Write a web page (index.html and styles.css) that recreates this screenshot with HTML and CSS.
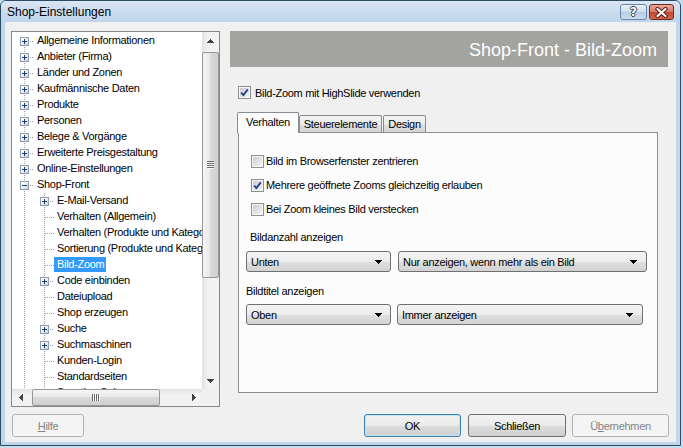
FILE: index.html
```html
<!DOCTYPE html>
<html lang="de">
<head>
<meta charset="utf-8">
<title>Shop-Einstellungen</title>
<link rel="stylesheet" href="styles.css">
</head>
<body>
<div class="window">
  <div class="titlebar">
    <span class="title">Shop-Einstellungen</span>
    <span class="cap-help">?</span>
    <span class="cap-close"><svg width="13" height="11" viewBox="0 0 13 11"><path d="M2.5 2 L10.5 9 M10.5 2 L2.5 9" stroke="#5a1f16" stroke-width="4.2" stroke-linecap="round"/><path d="M2.5 2 L10.5 9 M10.5 2 L2.5 9" stroke="#fff" stroke-width="2.2" stroke-linecap="round"/></svg></span>
  </div>
  <div class="client">
    <div class="leftcol">
      <div class="treebox">
        <div class="tree">
          <div class="row"><span class="cell first"><i class="exp"></i><i class="dash"></i></span><span class="label">Allgemeine Informationen</span></div>
          <div class="row"><span class="cell"><i class="exp"></i><i class="dash"></i></span><span class="label">Anbieter (Firma)</span></div>
          <div class="row"><span class="cell"><i class="exp"></i><i class="dash"></i></span><span class="label">Länder und Zonen</span></div>
          <div class="row"><span class="cell"><i class="exp"></i><i class="dash"></i></span><span class="label">Kaufmännische Daten</span></div>
          <div class="row"><span class="cell"><i class="exp"></i><i class="dash"></i></span><span class="label">Produkte</span></div>
          <div class="row"><span class="cell"><i class="exp"></i><i class="dash"></i></span><span class="label">Personen</span></div>
          <div class="row"><span class="cell"><i class="exp"></i><i class="dash"></i></span><span class="label">Belege &amp; Vorgänge</span></div>
          <div class="row"><span class="cell"><i class="exp"></i><i class="dash"></i></span><span class="label">Erweiterte Preisgestaltung</span></div>
          <div class="row"><span class="cell"><i class="exp"></i><i class="dash"></i></span><span class="label">Online-Einstellungen</span></div>
          <div class="row"><span class="cell"><i class="exp minus"></i><i class="dash"></i></span><span class="label">Shop-Front</span></div>
          <div class="row"><span class="cell"></span><span class="cell"><i class="exp"></i><i class="dash"></i></span><span class="label">E-Mail-Versand</span></div>
          <div class="row"><span class="cell"></span><span class="cell"><i class="dash leaf"></i></span><span class="label">Verhalten (Allgemein)</span></div>
          <div class="row"><span class="cell"></span><span class="cell"><i class="dash leaf"></i></span><span class="label">Verhalten (Produkte und Kategorien)</span></div>
          <div class="row"><span class="cell"></span><span class="cell"><i class="dash leaf"></i></span><span class="label">Sortierung (Produkte und Kategorien)</span></div>
          <div class="row"><span class="cell"></span><span class="cell"><i class="dash leaf"></i></span><span class="label sel">Bild-Zoom</span></div>
          <div class="row"><span class="cell"></span><span class="cell"><i class="exp"></i><i class="dash"></i></span><span class="label">Code einbinden</span></div>
          <div class="row"><span class="cell"></span><span class="cell"><i class="dash leaf"></i></span><span class="label">Dateiupload</span></div>
          <div class="row"><span class="cell"></span><span class="cell"><i class="dash leaf"></i></span><span class="label">Shop erzeugen</span></div>
          <div class="row"><span class="cell"></span><span class="cell"><i class="exp"></i><i class="dash"></i></span><span class="label">Suche</span></div>
          <div class="row"><span class="cell"></span><span class="cell"><i class="exp"></i><i class="dash"></i></span><span class="label">Suchmaschinen</span></div>
          <div class="row"><span class="cell"></span><span class="cell"><i class="dash leaf"></i></span><span class="label">Kunden-Login</span></div>
          <div class="row"><span class="cell"></span><span class="cell"><i class="dash leaf"></i></span><span class="label">Standardseiten</span></div>
          <div class="row"><span class="cell"></span><span class="cell"><i class="dash leaf"></i></span><span class="label">Sonstige Seiten</span></div>
        </div>
        <div class="vscroll">
          <div class="sarrow"><svg width="7" height="4" viewBox="0 0 7 4"><path d="M3 0h1v1h-1z M2 1h3v1h-3z M1 2h5v1h-5z M0 3h7v1h-7z" fill="#404040"/></svg></div>
          <div class="vtrack">
            <div class="vthumb"><svg width="7" height="8" viewBox="0 0 7 8"><path d="M0 0h7v1h-7z M0 2h7v1h-7z M0 4h7v1h-7z M0 6h7v1h-7z" fill="#6a6a6a"/><path d="M0 1h7v1h-7z M0 3h7v1h-7z M0 5h7v1h-7z M0 7h7v1h-7z" fill="#fbfbfb"/></svg></div>
          </div>
          <div class="sarrow"><svg width="7" height="4" viewBox="0 0 7 4"><path d="M0 0h7v1h-7z M1 1h5v1h-5z M2 2h3v1h-3z M3 3h1v1h-1z" fill="#404040"/></svg></div>
        </div>
        <div class="hscroll">
          <div class="sarrow h"><svg width="4" height="7" viewBox="0 0 4 7"><path d="M0 3h1v1h-1z M1 2h1v3h-1z M2 1h1v5h-1z M3 0h1v7h-1z" fill="#404040"/></svg></div>
          <div class="htrack">
            <div class="hthumb"><svg width="8" height="7" viewBox="0 0 8 7"><path d="M0 0h1v7h-1z M2 0h1v7h-1z M4 0h1v7h-1z M6 0h1v7h-1z" fill="#6a6a6a"/><path d="M1 0h1v7h-1z M3 0h1v7h-1z M5 0h1v7h-1z M7 0h1v7h-1z" fill="#fbfbfb"/></svg></div>
          </div>
          <div class="sarrow h"><svg width="4" height="7" viewBox="0 0 4 7"><path d="M0 0h1v7h-1z M1 1h1v5h-1z M2 2h1v3h-1z M3 3h1v1h-1z" fill="#404040"/></svg></div>
        </div>
        <div class="corner"></div>
      </div>
      <div class="btn dis hilfe"><span><u>H</u>ilfe</span></div>
    </div>

    <div class="rightcol">
      <div class="header">Shop-Front - Bild-Zoom</div>
      <div class="toprow">
        <span class="cb"><svg width="9" height="9" viewBox="0 0 9 9"><path d="M1.2 4.6 L3.4 7 L7.8 1.4" fill="none" stroke="#233f8f" stroke-width="1.8"/></svg></span>
        <span>Bild-Zoom mit HighSlide verwenden</span>
      </div>
      <div class="tabs">
        <div class="tab active">Verhalten</div>
        <div class="tab t2">Steuerelemente</div>
        <div class="tab t3">Design</div>
      </div>
      <div class="panel">
        <div class="crow"><span class="cb"></span><span>Bild im Browserfenster zentrieren</span></div>
        <div class="crow"><span class="cb"><svg width="9" height="9" viewBox="0 0 9 9"><path d="M1.2 4.6 L3.4 7 L7.8 1.4" fill="none" stroke="#233f8f" stroke-width="1.8"/></svg></span><span>Mehrere geöffnete Zooms gleichzeitig erlauben</span></div>
        <div class="crow"><span class="cb"></span><span>Bei Zoom kleines Bild verstecken</span></div>

        <div class="lbl first">Bildanzahl anzeigen</div>
        <div class="ddrow r1">
          <div class="dd small"><span class="ddtext">Unten</span><svg width="7" height="4" viewBox="0 0 7 4"><path d="M0 0h7v1h-7z M1 1h5v1h-5z M2 2h3v1h-3z M3 3h1v1h-1z" fill="#000"/></svg></div>
          <div class="dd wide1"><span class="ddtext">Nur anzeigen, wenn mehr als ein Bild</span><svg width="7" height="4" viewBox="0 0 7 4"><path d="M0 0h7v1h-7z M1 1h5v1h-5z M2 2h3v1h-3z M3 3h1v1h-1z" fill="#000"/></svg></div>
        </div>

        <div class="lbl second">Bildtitel anzeigen</div>
        <div class="ddrow r2">
          <div class="dd small"><span class="ddtext">Oben</span><svg width="7" height="4" viewBox="0 0 7 4"><path d="M0 0h7v1h-7z M1 1h5v1h-5z M2 2h3v1h-3z M3 3h1v1h-1z" fill="#000"/></svg></div>
          <div class="dd wide2"><span class="ddtext">Immer anzeigen</span><svg width="7" height="4" viewBox="0 0 7 4"><path d="M0 0h7v1h-7z M1 1h5v1h-5z M2 2h3v1h-3z M3 3h1v1h-1z" fill="#000"/></svg></div>
        </div>
      </div>
      <div class="btnrow">
        <div class="btn ok">OK</div>
        <div class="btn close">Schließen</div>
        <div class="btn dis apply"><span>Ü<u>b</u>ernehmen</span></div>
      </div>
    </div>
  </div>
</div>
</body>
</html>
```

FILE: styles.css
```css
* { box-sizing: border-box; }
html, body { margin: 0; padding: 0; }
body {
  width: 683px;
  height: 448px;
  overflow: hidden;
  background: #c6dded;
  font-family: "Liberation Sans", Arial, sans-serif;
  font-size: 11px;
  letter-spacing: -0.3px;
  color: #000;
}
i { font-style: normal; }

.window {
  width: 681px;
  height: 446px;
  border: 1px solid #2d4a63;
  border-radius: 6px 6px 0 0;
  background: #c1d6eb;
  display: flex;
  flex-direction: column;
}

/* title bar */
.titlebar {
  height: 21px;
  flex: none;
  display: flex;
  align-items: flex-start;
  background: linear-gradient(#d8e6f4, #bfd4eb);
  border-radius: 5px 5px 0 0;
}
.title {
  flex: 1;
  font-size: 12px;
  letter-spacing: 0;
  padding: 3px 0 0 6px;
  line-height: 16px;
}
.cap-help {
  margin-top: 3px;
  width: 27px;
  height: 16px;
  border: 1px solid #6a86a5;
  border-radius: 3px;
  background: linear-gradient(#e9f1f9, #cddcee 50%, #b6cce4 51%, #c9dbef);
  color: #fff;
  font-family: "DejaVu Sans", sans-serif;
  font-weight: bold;
  font-size: 12px;
  letter-spacing: 0;
  line-height: 14px;
  text-align: center;
  text-shadow: 1px 0 0 #2e3e55, -1px 0 0 #2e3e55, 0 1px 0 #2e3e55, 0 -1px 0 #2e3e55;
}
.cap-close {
  margin: 3px 6px 0 2px;
  width: 25px;
  height: 16px;
  border: 1px solid #6b2a20;
  border-radius: 3px;
  background: linear-gradient(#eaa796, #d77966 50%, #c4452f 51%, #d7664f);
  display: flex;
  align-items: center;
  justify-content: center;
}

/* client area */
.client {
  flex: 1;
  margin: 0 4px 3px 4px;
  background: #f0f0f0;
  display: flex;
  gap: 10px;
  padding: 9px 0 0 6px;
}

.leftcol {
  width: 209px;
  display: flex;
  flex-direction: column;
}

.treebox {
  height: 376px;
  border: 1px solid #828790;
  background: #fff;
  display: grid;
  grid-template-columns: 1fr 17px;
  grid-template-rows: 1fr 17px;
}

.tree {
  overflow: hidden;
  padding: 1px 0 0 2px;
}
.row {
  height: 16px;
  display: flex;
  white-space: nowrap;
}
.cell {
  width: 20px;
  height: 16px;
  flex: none;
  display: flex;
  align-items: center;
  background-image: repeating-linear-gradient(to bottom, #a0a0a0 0 1px, transparent 1px 2px);
  background-size: 1px 100%;
  background-position: 10px 0;
  background-repeat: no-repeat;
}
.cell.first { background-position: 10px 8px; }
.exp {
  display: block;
  flex: none;
  width: 9px;
  height: 9px;
  margin-left: 6px;
  border: 1px solid #8e9bab;
  background:
    linear-gradient(#1f3a70, #1f3a70) center / 5px 1px no-repeat,
    linear-gradient(#1f3a70, #1f3a70) center / 1px 5px no-repeat,
    linear-gradient(135deg, #ffffff 25%, #c8cfd8);
}
.exp.minus {
  background:
    linear-gradient(#1f3a70, #1f3a70) center / 5px 1px no-repeat,
    linear-gradient(135deg, #ffffff 25%, #c8cfd8);
}
.dash {
  display: block;
  flex: 1;
  height: 1px;
  margin-left: 1px;
  background: repeating-linear-gradient(to right, #a0a0a0 0 1px, transparent 1px 2px);
}
.dash.leaf { margin-left: 11px; }
.label {
  height: 15px;
  line-height: 15px;
  padding: 0 2px 0 3px;
}
.label.sel {
  background: #3399ff;
  color: #fff;
}

/* scrollbars */
.vscroll {
  display: flex;
  flex-direction: column;
  background: linear-gradient(to right, #e2e2e2, #f2f2f2 35%, #f2f2f2);
}
.sarrow {
  height: 17px;
  flex: none;
  display: flex;
  align-items: center;
  justify-content: center;
}
.sarrow.h { width: 17px; height: auto; }
.vtrack {
  flex: 1;
  display: flex;
  flex-direction: column;
}
.vthumb {
  margin-top: 3px;
  height: 226px;
  border: 1px solid #979797;
  border-radius: 2px;
  background: linear-gradient(to right, #f5f5f5, #e9e9e9 45%, #d9d9d9 50%, #cfcfcf);
  display: flex;
  align-items: center;
  justify-content: center;
}
.hscroll {
  display: flex;
  background: linear-gradient(#e2e2e2, #f2f2f2 35%, #f2f2f2);
}
.htrack {
  flex: 1;
  display: flex;
}
.hthumb {
  margin-left: 3px;
  width: 128px;
  border: 1px solid #979797;
  border-radius: 2px;
  background: linear-gradient(#f5f5f5, #e9e9e9 45%, #d9d9d9 50%, #cfcfcf);
  display: flex;
  align-items: center;
  justify-content: center;
}
.corner { background: #f0f0f0; }

/* buttons */
.btn {
  height: 23px;
  border: 1px solid #707070;
  border-radius: 3px;
  background: linear-gradient(#f2f2f2, #ebebeb 50%, #dddddd 51%, #cfcfcf);
  display: flex;
  align-items: center;
  justify-content: center;
  flex: none;
}
.btn.dis {
  border-color: #adb2b5;
  background: #f4f4f4;
  color: #838383;
}
.hilfe {
  width: 72px;
  margin: 7px 0 0 1px;
}

/* right column */
.rightcol {
  width: 439px;
  display: flex;
  flex-direction: column;
}
.header {
  height: 36px;
  margin-right: 1px;
  background: #a3a39f;
  color: #fff;
  font-size: 18px;
  letter-spacing: 0;
  text-align: right;
  padding: 2px 11px 0 0;
  line-height: 34px;
}
.toprow {
  margin: 19px 0 0 8px;
  height: 13px;
  display: flex;
  align-items: center;
  gap: 4px;
}
.cb {
  width: 13px;
  height: 13px;
  flex: none;
  border: 1px solid #8e8f8f;
  padding: 1px;
  background: linear-gradient(135deg, #c9ccd1, #f4f4f4) content-box, #f6f6f6;
  display: flex;
}
.cb svg { display: block; }

.tabs {
  margin: 13px 0 0 7px;
  height: 21px;
  display: flex;
  align-items: flex-end;
}
.tab {
  height: 18px;
  border: 1px solid #898c95;
  border-bottom: none;
  border-radius: 2px 2px 0 0;
  background: linear-gradient(#f2f2f2, #ebebeb 50%, #dddddd 51%, #d5d5d5);
  text-align: center;
  line-height: 16px;
}
.tab.active {
  height: 21px;
  width: 62px;
  background: #fcfcfc;
  padding-top: 1px;
  position: relative;
  z-index: 1;
}
.tab.t2 { width: 83px; }
.tab.t3 { width: 43px; margin-left: 1px; }

.panel {
  margin: -1px 0 0 8px;
  width: 420px;
  height: 261px;
  border: 1px solid #898c95;
  background: #fcfcfc;
  padding: 16px 0 0 7px;
}
.crow {
  height: 24px;
  display: flex;
  align-items: center;
  gap: 2px;
  padding-left: 5px;
}
.lbl {
  line-height: 16px;
}
.lbl.first { margin-top: 8px; padding-left: 4px; }
.lbl.second { margin-top: 11px; }
.ddrow { display: flex; }
.ddrow.r1 { margin-top: 6px; gap: 7px; }
.ddrow.r2 { margin-top: 5px; gap: 6px; }
.dd {
  height: 21px;
  border: 1px solid #707070;
  border-radius: 3px;
  background: linear-gradient(#f4f4f4, #ececec 50%, #dfdfdf 51%, #d2d2d2);
  display: flex;
  align-items: center;
  padding: 0 8px 0 4px;
}
.ddtext { flex: 1; white-space: nowrap; }
.dd.small { width: 145px; }
.dd.wide1 { width: 249px; padding-right: 9px; }
.dd.wide2 { width: 246px; padding-right: 9px; }

.btnrow {
  margin-top: 21px;
  display: flex;
  justify-content: flex-end;
}
.btn.ok {
  width: 97px;
  border-color: #3c7fb1;
  box-shadow: inset 0 0 0 1px #bfe4f8;
}
.btn.close { width: 98px; margin-left: 7px; }
.btn.apply { width: 97px; margin-left: 6px; }
```
